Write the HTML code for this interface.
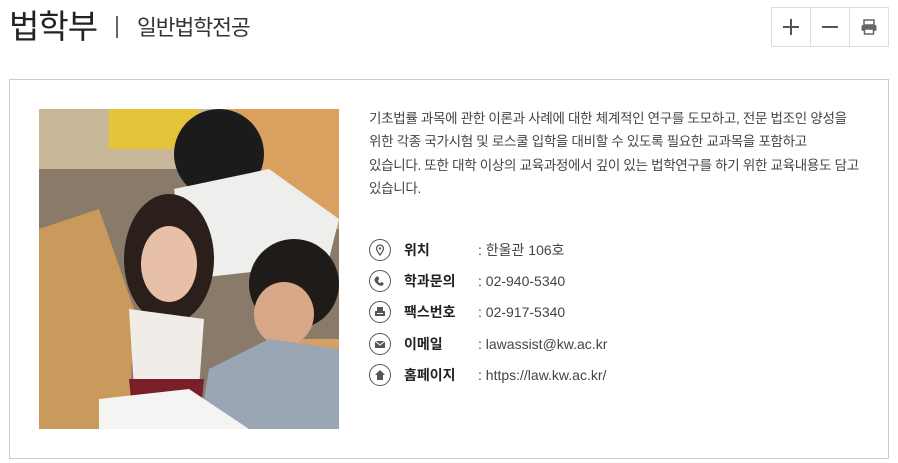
<!DOCTYPE html>
<html><head><meta charset="utf-8"><style>
*{margin:0;padding:0;box-sizing:border-box}
body{width:898px;height:463px;background:#fff;font-family:"Liberation Sans","Noto Sans CJK KR",sans-serif;color:#333;position:relative;overflow:hidden}
.t1{position:absolute;left:9px;top:5px;font-size:33px;color:#222;letter-spacing:-1px;line-height:44px}
.bar{position:absolute;left:116px;top:16px;width:2px;height:22px;background:#666}
.t2{position:absolute;left:137px;top:13px;font-size:21.5px;color:#333;line-height:30px;letter-spacing:-1px}
.btns{position:absolute;left:771px;top:7px;width:118px;height:40px;border:1px solid #ddd;display:flex}
.btns div{flex:1;border-right:1px solid #ddd;display:flex;align-items:center;justify-content:center}
.btns div:last-child{border-right:0}
.box{position:absolute;left:9px;top:79px;width:880px;height:380px;border:1px solid #ccc}
.photo{position:absolute;left:39px;top:109px;width:300px;height:320px;overflow:hidden}
.desc{position:absolute;left:369px;top:107px;width:510px;white-space:nowrap;font-size:13.5px;line-height:23.3px;color:#444;letter-spacing:-0.3px}
.row{position:absolute;left:369px;height:22px;display:flex;align-items:center;font-size:14px}
.ic{width:22px;height:22px;border:1.5px solid #555;border-radius:50%;display:flex;align-items:center;justify-content:center}
.lb{position:absolute;left:35px;font-weight:bold;color:#222;white-space:nowrap}
.vl{position:absolute;left:109px;color:#444;white-space:nowrap}
</style></head><body>
<div class="t1">법학부</div><div class="bar"></div><div class="t2">일반법학전공</div>
<div class="btns">
<div><svg width="18" height="18"><path d="M9 1v16M1 9h16" stroke="#555" stroke-width="2"/></svg></div>
<div><svg width="18" height="18"><path d="M1 9h16" stroke="#555" stroke-width="2"/></svg></div>
<div><svg width="18" height="18"><rect x="4" y="2" width="10" height="5" fill="none" stroke="#666" stroke-width="1.5"/><rect x="1.5" y="7" width="15" height="6" rx="1.5" fill="#666"/><rect x="4.5" y="11" width="9" height="5" fill="#fff" stroke="#666" stroke-width="1.5"/></svg></div>
</div>
<div class="box"></div>
<div class="photo"><svg width="300" height="320">
<rect width="300" height="320" fill="#8a7a6a"/>
<rect x="0" y="0" width="300" height="60" fill="#c9b79a"/>
<rect x="180" y="0" width="120" height="120" fill="#d9a060"/>
<rect x="70" y="0" width="90" height="40" fill="#e6c43a"/>
<polygon points="0,120 60,100 95,200 90,320 0,320" fill="#c99a5c"/>
<rect x="250" y="230" width="50" height="90" fill="#d6a064"/>
<ellipse cx="180" cy="45" rx="45" ry="45" fill="#1b1b1b"/>
<polygon points="135,80 230,60 300,110 290,150 240,160 150,170" fill="#eeeeec"/>
<ellipse cx="130" cy="150" rx="45" ry="65" fill="#2a1f1a"/>
<ellipse cx="130" cy="155" rx="28" ry="38" fill="#e8c0a8"/>
<polygon points="90,200 165,210 160,280 95,280" fill="#f0ece8"/>
<polygon points="90,270 165,270 160,320 95,320" fill="#7a1f28"/>
<ellipse cx="255" cy="175" rx="45" ry="45" fill="#1e1b18"/>
<ellipse cx="245" cy="205" rx="30" ry="32" fill="#d9a888"/>
<polygon points="170,260 230,230 300,240 300,320 160,320" fill="#9aa6b4"/>
<polygon points="60,290 150,280 210,320 60,320" fill="#f4f4f2"/>
</svg></div>
<div class="desc">기초법률 과목에 관한 이론과 사례에 대한 체계적인 연구를 도모하고, 전문 법조인 양성을<br>위한 각종 국가시험 및 로스쿨 입학을 대비할 수 있도록 필요한 교과목을 포함하고<br>있습니다. 또한 대학 이상의 교육과정에서 깊이 있는 법학연구를 하기 위한 교육내용도 담고<br>있습니다.</div>
<div class="row" style="top:239px"><div class="ic"><svg width="12" height="12"><path d="M6 11C3 7 2.5 5.5 2.5 4.5a3.5 3.5 0 0 1 7 0C9.5 5.5 9 7 6 11z" fill="none" stroke="#555" stroke-width="1.3"/><circle cx="6" cy="4.5" r="1.2" fill="#555"/></svg></div><span class="lb">위치</span><span class="vl">: 한울관 106호</span></div>
<div class="row" style="top:270px"><div class="ic"><svg width="12" height="12"><path d="M2 2c1-1 2-1 3 1l0 1c0 1-1 1-1 2 1 2 1 2 2 2 1 0 1-1 2-1 2 1 2 2 1 3-2 2-5 0-7-2S0 4 2 2z" fill="#555"/></svg></div><span class="lb">학과문의</span><span class="vl">: 02-940-5340</span></div>
<div class="row" style="top:301px"><div class="ic"><svg width="12" height="12"><rect x="3" y="1" width="6" height="4" fill="#555"/><rect x="1" y="5" width="10" height="5" fill="#555"/><rect x="3" y="7" width="6" height="1" fill="#fff"/></svg></div><span class="lb">팩스번호</span><span class="vl">: 02-917-5340</span></div>
<div class="row" style="top:333px"><div class="ic"><svg width="12" height="12"><rect x="1" y="3" width="10" height="7" fill="#555"/><path d="M1 3l5 4 5-4" fill="none" stroke="#fff" stroke-width="1"/></svg></div><span class="lb">이메일</span><span class="vl">: lawassist@kw.ac.kr</span></div>
<div class="row" style="top:364px"><div class="ic"><svg width="12" height="12"><path d="M6 1L1 6h2v5h6V6h2z" fill="#555"/></svg></div><span class="lb">홈페이지</span><span class="vl">: https://law.kw.ac.kr/</span></div>
</body></html>
